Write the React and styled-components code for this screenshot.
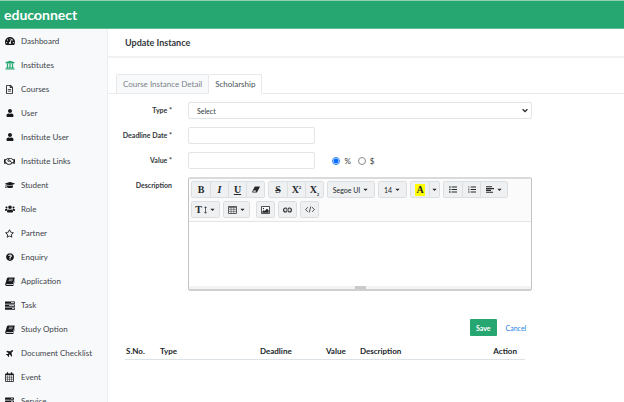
import React from "react";
import styled, { createGlobalStyle, css } from "styled-components";
import {
  FaTachometerAlt, FaUniversity, FaRegFileAlt, FaUser, FaRegHandshake, FaGraduationCap,
  FaUsers, FaRegStar, FaQuestionCircle, FaServer, FaPlane, FaCaretDown,
} from "react-icons/fa";

const Global = createGlobalStyle`
  * { box-sizing: border-box; }
  html, body, #root { height: 100%; }
  body {
    margin: 0;
    overflow: hidden;
    background: #fff;
    color: #33373b;
    font: 8px/12px Lato, "Noto Sans", sans-serif;
  }
  button, input, select { font: inherit; color: inherit; margin: 0; }
`;

const Page = styled.div`
  height: 100vh;
  display: flex;
  flex-direction: column;
`;
const Header = styled.header`
  flex: none;
  height: 29px;
  padding: 0 4px;
  display: flex;
  align-items: center;
  background: #26a671;
  border-top: 1px solid #8fd0b4;
  border-bottom: 1px solid #5fbd95;
`;
const Brand = styled.a`
  position: relative;
  color: #fff;
  text-decoration: none;
  font: 700 14px/20px Lato, sans-serif;
`;
const BrandJoin = styled.svg`
  position: absolute;
  left: 28px;
  top: 6px;
`;
const Body = styled.div`
  flex: 1;
  min-height: 0;
  display: flex;
`;
const Sidebar = styled.nav`
  flex: none;
  width: 108px;
  overflow: hidden;
  background: #f8f9fb;
  border-right: 1px solid #eceef0;
`;
const NavLink = styled.a`
  height: 24px;
  padding-left: 4px;
  display: flex;
  align-items: center;
  gap: 6px;
  color: #40454a;
  text-decoration: none;
  white-space: nowrap;
`;
const NavIcon = styled.span`
  width: 11px;
  display: flex;
  justify-content: center;
  font-size: ${(p) => p.$size}px;
  color: ${(p) => (p.$active ? "#26a671" : "#16191c")};
`;
const Main = styled.main`
  flex: 1;
  min-width: 0;
`;
const Title = styled.h1`
  margin: 0;
  height: 29px;
  padding-left: 17px;
  font-size: 9px;
  font-weight: 700;
  line-height: 28px;
  border-bottom: 2px solid #f1f2f3;
`;
const Tabs = styled.div`
  display: flex;
  margin-top: 16px;
  padding-left: 8px;
  border-bottom: 1px solid #e9ebed;
`;
const Tab = styled.button`
  height: 20px;
  margin-bottom: -1px;
  padding: 0 6px;
  background: ${(p) => (p.$active ? "#fff" : "#f8f9fb")};
  color: ${(p) => (p.$active ? "#495057" : "#7b838a")};
  border: 1px solid #e6e8ea;
  border-bottom-color: ${(p) => (p.$active ? "#fff" : "#e9ebed")};
  border-radius: 2px 2px 0 0;
  & + & { border-left: 0; }
`;
const Form = styled.form`
  width: 83%;
  padding: 8px 4px 0 12px;
  display: flex;
  flex-direction: column;
  gap: 8px;
`;
const Row = styled.div`
  display: grid;
  grid-template-columns: 52px minmax(0, 1fr);
  column-gap: 16px;
`;
const Label = styled.label`
  font-size: 7px;
  font-weight: 700;
  line-height: 16px;
  text-align: right;
  white-space: nowrap;
`;
const field = css`
  height: 17px;
  background: #fff;
  border: 1px solid #e2e5e8;
  border-radius: 2px;
`;
const SelectWrap = styled.div`
  position: relative;
  svg {
    position: absolute;
    right: 4px;
    top: 6px;
    pointer-events: none;
  }
`;
const Select = styled.select`
  ${field}
  display: block;
  width: 100%;
  padding: 0 8px;
  appearance: none;
  font-size: 7px;
`;
const Input = styled.input`
  ${field}
  width: 37%;
  padding: 0 8px;
`;
const Inline = styled.div`
  display: flex;
  align-items: center;
`;
const Radios = styled.div`
  display: flex;
  gap: 7px;
  margin-left: 17px;
`;
const RadioLabel = styled.label`
  display: flex;
  align-items: center;
  gap: 4px;
`;
const Radio = styled.input`
  appearance: none;
  width: 8px;
  height: 8px;
  border: 1px solid #8a8a8a;
  border-radius: 50%;
  background: #fff;
  &:checked {
    border-color: #2b83ee;
    background: radial-gradient(circle, #0a6cff 0 2px, #fff 3px);
  }
`;
const Editor = styled.div`
  border: 1px solid #c4c4c4;
  border-top: 2px solid #dadada;
  border-bottom: 2px solid #cfcfcf;
  border-radius: 2px;
`;
const Toolbar = styled.div`
  padding: 2px 2px 3px;
  display: flex;
  flex-direction: column;
  gap: 3px;
  background: #fbfbfb;
  border-bottom: 1px solid #e4e4e4;
`;
const ToolLine = styled.div`
  display: flex;
  gap: 3px;
`;
const Group = styled.div`
  flex: none;
  display: flex;
  margin-left: ${(p) => p.$gap || 0}px;
  border: 1px solid #dcdfe2;
  border-radius: 2px;
  overflow: hidden;
`;
const Tool = styled.button`
  width: ${(p) => p.$w || 18}px;
  height: 15px;
  padding: 0;
  display: flex;
  align-items: center;
  justify-content: center;
  gap: 2px;
  background: #eef0f2;
  border: 0;
  font-size: 7px;
  color: #25282b;
  white-space: nowrap;
  & + & { border-left: 1px solid #dcdfe2; }
`;
const Glyph = styled.span`
  font: 700 10px/12px "Liberation Serif", serif;
  font-style: ${(p) => (p.$italic ? "italic" : "normal")};
  text-decoration: ${(p) => p.$line || "none"};
  background: ${(p) => p.$bg || "none"};
  padding: ${(p) => (p.$bg ? "0 1px" : 0)};
`;
const Script = styled.sub`
  font-size: 5px;
  line-height: 1px;
  vertical-align: ${(p) => (p.$up ? "super" : "sub")};
`;
const Area = styled.div`
  height: 64px;
  outline: 0;
`;
const Resize = styled.div`
  height: 3px;
  display: flex;
  justify-content: center;
  background: #f3f3f3;
`;
const Grip = styled.span`
  width: 11px;
  background: #cacaca;
`;
const Actions = styled.div`
  display: flex;
  justify-content: flex-end;
  align-items: center;
  gap: 9px;
  padding: 20px 6px 0 0;
`;
const Save = styled.button`
  height: 17px;
  padding: 0 6px;
  background: #26a671;
  color: #fff;
  border: 0;
  border-radius: 1px;
  font-size: 7px;
  font-weight: 700;
`;
const Cancel = styled.a`
  color: #2483e6;
  font-size: 7px;
  text-decoration: none;
`;
const Table = styled.table`
  width: 77.5%;
  margin: 7px 0 0 17px;
  border-collapse: collapse;
  table-layout: fixed;
`;
const Th = styled.th`
  width: ${(p) => p.$w};
  padding: 2px 1px;
  text-align: ${(p) => p.$align || "left"};
  padding-right: ${(p) => (p.$align ? 8 : 0)}px;
  font-weight: 700;
  color: #212529;
  border-bottom: 1px solid #dde2e6;
`;

const Book = () => (
  <svg width="10" height="9" viewBox="0 0 10 9">
    <path d="M3.2.5h6.1q.6 0 .4.6L8.2 6.6q-.2.6-.8.6H1.5q-.5 0-.4.5.1.4.5.4h6.6L9.7 3l.2.5L8.6 8.3q-.2.6-.8.6H1.5Q0 8.8.2 7.2L1.9 1.5Q2.3.5 3.2.5z" fill="currentColor" />
    <path d="M4 2.2h3.8M3.6 3.7h3.8" stroke="#f8f9fb" strokeWidth=".6" />
  </svg>
);
const Tasks = () => (
  <svg width="10" height="9" viewBox="0 0 10 9" fill="currentColor">
    <path fillRule="evenodd" d="M0 .5h10v2.2H0zM6 1.2h3.3V2H6zM0 3.5h10v2.2H0zM4 4.2h5.3V5H4zM0 6.5h10v2.2H0zM7 7.2h2.3V8H7z" />
  </svg>
);
const Calendar = () => (
  <svg width="9" height="10" viewBox="0 0 9 10" fill="none" stroke="currentColor">
    <path d="M.5 2h8v7.500h-8z" strokeWidth=".8" />
    <path d="M.5 2.500h8" strokeWidth="1.4" />
    <path d="M2.500.3v2M6.500.3v2" strokeWidth="1.2" />
    <path d="M.5 5.200h8M.5 7.300h8M2.500 3.500v6M4.500 3.500v6M6.500 3.500v6" strokeWidth=".5" />
  </svg>
);
const Plane = styled(FaPlane)`
  transform: rotate(-45deg);
`;
const Eraser = () => (
  <svg width="8" height="7" viewBox="0 0 8 7">
    <path d="M3.200.5H7.500Q8 .6 7.700 1.200L5.200 6Q5 6.500 4.400 6.500H.6Q0 6.400.2 5.800L2.500 1Q2.700.5 3.200.5z" fill="currentColor" />
    <path d="M1 5.800 1.700 4.600h2.500L3.600 5.800z" fill="#eef0f2" />
  </svg>
);
const List = ({ ordered }) => (
  <svg width="8" height="7" viewBox="0 0 8 7" stroke="currentColor" fill="none">
    <path d="M2.600 1H8M2.600 3.500H8M2.600 6H8" strokeWidth="1.1" />
    {ordered
      ? <path d="M.4.400h.5v1.400M.2 2.900h1L.3 4.200h1M.2 5.400h1v1.200h-1" strokeWidth=".5" />
      : <path d="M.2 1h1.300M.2 3.500h1.300M.2 6h1.300" strokeWidth="1.3" />}
  </svg>
);
const Align = () => (
  <svg width="8" height="7" viewBox="0 0 8 7" stroke="currentColor" strokeWidth="1.1">
    <path d="M0 .8h6M0 2.600h8M0 4.400h5M0 6.200h7" />
  </svg>
);
const Grid = () => (
  <svg width="9" height="8" viewBox="0 0 9 8" fill="none" stroke="#4a4d50">
    <path d="M.5.5h8v7h-8z" strokeWidth=".9" />
    <path d="M.5 1.200h8" />
    <path d="M.5 3.300h8M.5 5.400h8M3.100 1v6.500M5.800 1v6.500" strokeWidth=".6" />
  </svg>
);
const Picture = () => (
  <svg width="9" height="8" viewBox="0 0 9 8">
    <path d="M.5.5h8v7h-8z" fill="#fff" stroke="currentColor" strokeWidth=".8" />
    <path d="M1.300 6.700V5.500l1.500-1.400 1 .9 2.200-2.400 1.700 1.900v2.200z" fill="currentColor" />
    <circle cx="2.5" cy="2.5" r=".7" fill="currentColor" />
  </svg>
);
const Chain = () => (
  <svg width="9" height="6" viewBox="0 0 9 6" fill="none" stroke="currentColor" strokeWidth="1.1">
    <path d="M4 1.600Q3.500 1 2.600 1a2 2 0 0 0 0 4Q3.500 5 4 4.400M5 1.600Q5.500 1 6.400 1a2 2 0 0 1 0 4Q5.500 5 5 4.400M2.800 3h3.400" />
  </svg>
);
const Code = () => (
  <svg width="10" height="7" viewBox="0 0 10 7" fill="none" stroke="currentColor" strokeWidth=".8">
    <path d="M2.800 1.200.6 3.500l2.200 2.300M7.200 1.200l2.200 2.300-2.200 2.300M5.800.5 4.200 6.500" />
  </svg>
);
const UpDown = () => (
  <svg width="3" height="8" viewBox="0 0 3 8" fill="none" stroke="currentColor" strokeWidth=".7">
    <path d="M1.500.8v6.400M.4 2l1.100-1.200L2.600 2M.4 6l1.100 1.200L2.600 6" />
  </svg>
);

const NAV = [
  ["Dashboard", FaTachometerAlt, 10],
  ["Institutes", FaUniversity, 10],
  ["Courses", FaRegFileAlt, 9],
  ["User", FaUser, 8],
  ["Institute User", FaUser, 8],
  ["Institute Links", FaRegHandshake, 11],
  ["Student", FaGraduationCap, 10],
  ["Role", FaUsers, 10],
  ["Partner", FaRegStar, 9],
  ["Enquiry", FaQuestionCircle, 8],
  ["Application", Book, 8],
  ["Task", Tasks, 9],
  ["Study Option", Book, 8],
  ["Document Checklist", Plane, 8],
  ["Event", Calendar, 9],
  ["Service", FaServer, 9],
];

export default function App() {
  return (
    <Page>
      <Global />
      <Header>
        <Brand href="#">
          educonnect
          <BrandJoin width="8" height="9" viewBox="0 0 8 9" fill="none" stroke="#fff" strokeWidth="1.3">
            <path d="M1.800 7.800Q3 7 3.300 5Q3.600 3.400 4.600 3" />
          </BrandJoin>
        </Brand>
      </Header>
      <Body>
        <Sidebar>
          {NAV.map(([label, Icon, size]) => (
            <NavLink href="#" key={label}>
              <NavIcon $size={size} $active={label === "Institutes"}><Icon /></NavIcon>
              {label}
            </NavLink>
          ))}
        </Sidebar>
        <Main>
          <Title>Update Instance</Title>
          <Tabs role="tablist">
            <Tab role="tab">Course Instance Detail</Tab>
            <Tab role="tab" $active aria-selected="true">Scholarship</Tab>
          </Tabs>
          <Form>
            <Row>
              <Label htmlFor="type">Type *</Label>
              <SelectWrap>
                <Select id="type"><option>Select</option></Select>
                <svg width="6" height="5" viewBox="0 0 6 5" fill="none" stroke="#333" strokeWidth="1.4">
                  <path d="M0.6 1.2 3 3.5 5.4 1.2" />
                </svg>
              </SelectWrap>
            </Row>
            <Row>
              <Label htmlFor="deadline">Deadline Date *</Label>
              <Inline><Input id="deadline" /></Inline>
            </Row>
            <Row>
              <Label htmlFor="value">Value *</Label>
              <Inline>
                <Input id="value" />
                <Radios>
                  <RadioLabel><Radio type="radio" name="unit" defaultChecked />%</RadioLabel>
                  <RadioLabel><Radio type="radio" name="unit" />$</RadioLabel>
                </Radios>
              </Inline>
            </Row>
            <Row>
              <Label as="span" id="desc">Description</Label>
              <Editor>
                <Toolbar>
                  <ToolLine>
                    <Group>
                      <Tool type="button"><Glyph>B</Glyph></Tool>
                      <Tool type="button"><Glyph $italic>I</Glyph></Tool>
                      <Tool type="button"><Glyph $line="underline">U</Glyph></Tool>
                      <Tool type="button" aria-label="Clear"><Eraser /></Tool>
                    </Group>
                    <Group>
                      <Tool type="button"><Glyph $line="line-through">S</Glyph></Tool>
                      <Tool type="button"><Glyph>X<Script as="sup" $up>2</Script></Glyph></Tool>
                      <Tool type="button"><Glyph>X<Script>2</Script></Glyph></Tool>
                    </Group>
                    <Group><Tool type="button" $w={46}>Segoe UI <FaCaretDown /></Tool></Group>
                    <Group><Tool type="button" $w={27}>14 <FaCaretDown /></Tool></Group>
                    <Group>
                      <Tool type="button"><Glyph $bg="#ffff00">A</Glyph></Tool>
                      <Tool type="button" $w={10} aria-label="More colors"><FaCaretDown /></Tool>
                    </Group>
                    <Group>
                      <Tool type="button" aria-label="Bullets"><List /></Tool>
                      <Tool type="button" aria-label="Numbers"><List ordered /></Tool>
                      <Tool type="button" $w={27} aria-label="Align"><Align /><FaCaretDown /></Tool>
                    </Group>
                  </ToolLine>
                  <ToolLine>
                    <Group><Tool type="button" $w={27} aria-label="Line height"><Glyph>T</Glyph><UpDown /><FaCaretDown /></Tool></Group>
                    <Group><Tool type="button" $w={25} aria-label="Table"><Grid /><FaCaretDown /></Tool></Group>
                    <Group $gap={3}><Tool type="button" $w={17} aria-label="Image"><Picture /></Tool></Group>
                    <Group><Tool type="button" $w={17} aria-label="Link"><Chain /></Tool></Group>
                    <Group><Tool type="button" $w={17} aria-label="Code"><Code /></Tool></Group>
                  </ToolLine>
                </Toolbar>
                <Area contentEditable suppressContentEditableWarning role="textbox" aria-labelledby="desc" />
                <Resize><Grip /></Resize>
              </Editor>
            </Row>
            <Actions>
              <Save type="button">Save</Save>
              <Cancel href="#">Cancel</Cancel>
            </Actions>
          </Form>
          <Table>
            <thead>
              <tr>
                <Th $w="8.5%">S.No.</Th>
                <Th $w="25%">Type</Th>
                <Th $w="16.5%">Deadline</Th>
                <Th $w="8.5%">Value</Th>
                <Th>Description</Th>
                <Th $w="18%" $align="right">Action</Th>
              </tr>
            </thead>
          </Table>
        </Main>
      </Body>
    </Page>
  );
}
